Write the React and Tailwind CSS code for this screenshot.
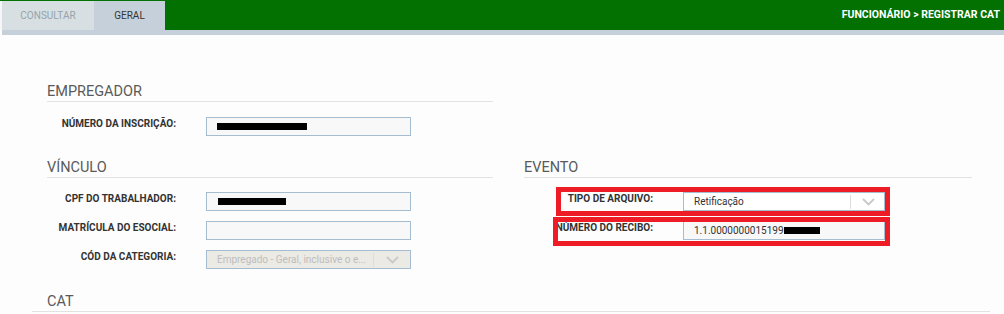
import React from "react";

const FONT = { fontFamily: "Roboto, 'Liberation Sans', sans-serif" };

function Chevron() {
  return (
    <svg width="13" height="8" viewBox="0 0 13 8" className="block">
      <polyline points="1,1 6.5,6.5 12,1" fill="none" stroke="#c9c9c9" strokeWidth="1.8" />
    </svg>
  );
}

function Title({ children, className = "" }) {
  return (
    <div
      className={
        "h-[19px] border-b border-[#e2e2e2] text-[14.5px] leading-[18px] text-[#5a5a5a] " + className
      }
    >
      {children}
    </div>
  );
}

function Row({ label, children }) {
  return (
    <div className="flex items-start">
      <div className="w-[129px] shrink-0 pt-[1px] text-right text-[10px] font-bold leading-[12px] text-[#333] whitespace-nowrap">
        {label}
      </div>
      <div className="ml-[30px]">{children}</div>
    </div>
  );
}

function Input({ w = "w-[205px]", bg = "bg-[#f8f8f8]", children }) {
  return (
    <div
      className={
        "flex h-[19px] items-center border border-[#a4bdd3] pl-[10px] text-[10px] text-[#333] whitespace-nowrap overflow-hidden " +
        w +
        " " +
        bg
      }
    >
      {children}
    </div>
  );
}

function Select({ w, bg, textColor, sepRight, children }) {
  return (
    <div
      className={
        "flex h-[19px] items-center border border-[#a4bdd3] pl-[10px] text-[10px] whitespace-nowrap overflow-hidden " +
        w +
        " " +
        bg
      }
    >
      <div className={"flex-1 overflow-hidden " + textColor}>{children}</div>
      <div className={"h-[14px] w-px bg-[#dcdcdc] " + sepRight} />
    </div>
  );
}

export default function App() {
  return (
    <div className="relative h-[314px] w-[1004px] overflow-hidden bg-[#fdfdfd]" style={FONT}>
      {/* header */}
      <div className="flex h-[30px] bg-[#027101]">
        <div className="mt-[1px] flex h-[29px]">
          <div className="w-[2px] bg-[#f4f6f7]" />
          <div className="flex w-[92px] items-center justify-center bg-[#d8dfe2] text-[10px] text-[#95a3aa]">
            CONSULTAR
          </div>
          <div className="flex w-[71px] items-center justify-center bg-[#c6d0da] text-[10px] text-[#333]">
            GERAL
          </div>
        </div>
        <div className="flex flex-1 items-center justify-end pr-[4px] text-[10.5px] font-bold text-white">
          FUNCIONÁRIO &gt; REGISTRAR CAT
        </div>
      </div>
      <div className="ml-[2px] h-[5px] bg-[#c6d0da]" />

      {/* content */}
      <div className="pl-[47px] pt-[48px]">
        <div className="grid grid-cols-[446px_448px] gap-x-[31px]">
          <div>
            <Title>EMPREGADOR</Title>
            <div className="mt-[15px]">
              <Row label="NÚMERO DA INSCRIÇÃO:">
                <Input>
                  <div className="h-[7px] w-[90px] bg-black" />
                </Input>
              </Row>
            </div>
          </div>
          <div />

          <div className="mt-[23px]">
            <Title>VÍNCULO</Title>
            <div className="mt-[14px] flex flex-col gap-[10px]">
              <Row label="CPF DO TRABALHADOR:">
                <Input>
                  <div className="ml-[1px] h-[7px] w-[68px] bg-black" />
                </Input>
              </Row>
              <Row label="MATRÍCULA DO ESOCIAL:">
                <Input />
              </Row>
              <Row label="CÓD DA CATEGORIA:">
                <div className="relative">
                  <Select w="w-[205px]" bg="bg-[#eceae5]" textColor="text-[#bdbdbd]" sepRight="mr-[36px]">
                    Empregado - Geral, inclusive o e...
                  </Select>
                  <div className="absolute right-[12px] top-[6px]">
                    <Chevron />
                  </div>
                </div>
              </Row>
            </div>
          </div>

          <div className="mt-[23px]">
            <Title>EVENTO</Title>
            <div className="mt-[14px] flex flex-col gap-[10px]">
              <Row label="TIPO DE ARQUIVO:">
                <div className="relative">
                  <Select w="w-[202px]" bg="bg-white" textColor="text-[#333]" sepRight="mr-[33px]">
                    Retificação
                  </Select>
                  <div className="absolute right-[10px] top-[6px]">
                    <Chevron />
                  </div>
                </div>
              </Row>
              <Row label="NÚMERO DO RECIBO:">
                <Input w="w-[202px]">
                  <span>1.1.0000000015199</span>
                  <div className="h-[7px] w-[36px] shrink-0 bg-black" />
                </Input>
              </Row>
            </div>
          </div>
        </div>
      </div>

      <div className="ml-[32px] mt-[24px] w-[958px]">
        <Title className="pl-[15px]">CAT</Title>
      </div>

      {/* annotation overlays */}
      <div className="pointer-events-none absolute left-[556px] top-[187px] h-[29px] w-[334px] border-[5px] border-[#ee1c25]" />
      <div className="pointer-events-none absolute left-[553px] top-[217px] h-[29px] w-[337px] border-[5px] border-[#ee1c25]" />
    </div>
  );
}
